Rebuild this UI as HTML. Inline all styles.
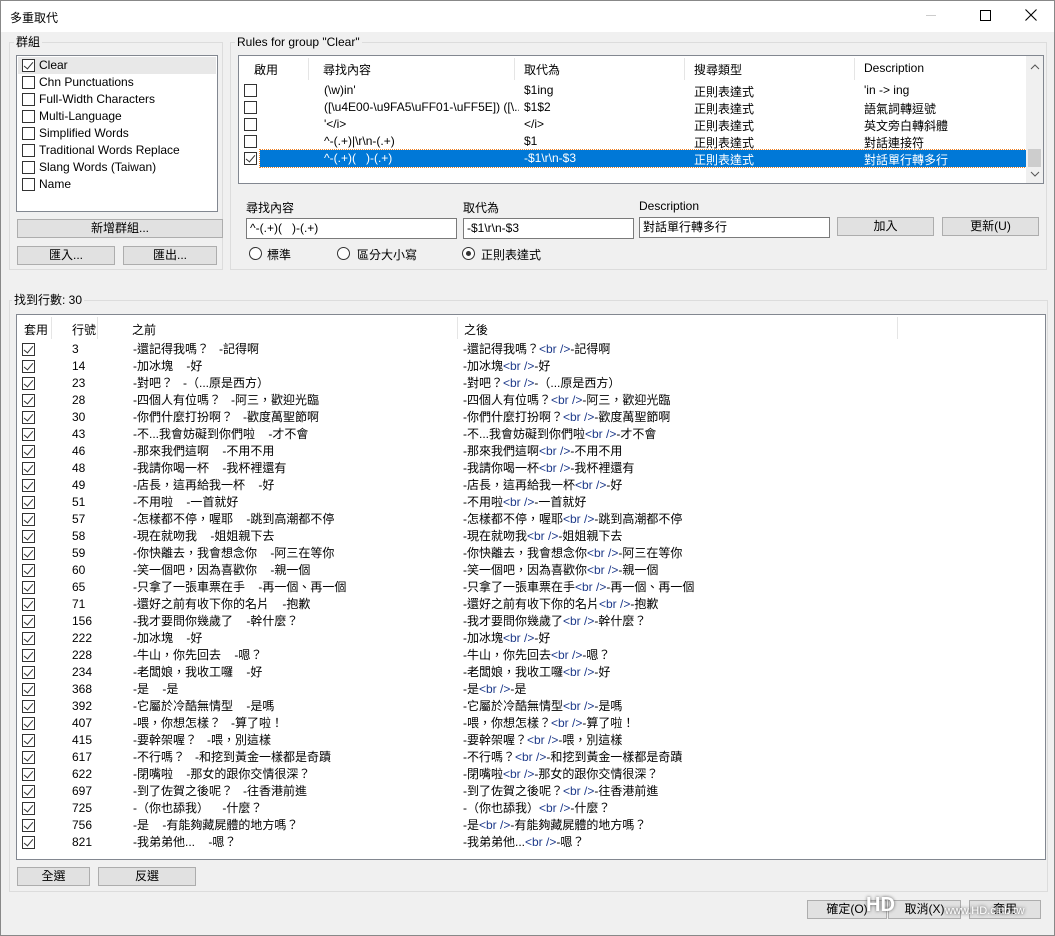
<!DOCTYPE html>
<html><head><meta charset="utf-8"><style>
*{box-sizing:border-box;margin:0;padding:0}
body{width:1055px;height:936px;background:#f0f0f0;font-family:"Liberation Sans","Noto Sans CJK TC",sans-serif;font-size:12px;color:#000;position:relative;overflow:hidden;border:1px solid #888}
.a{position:absolute;white-space:nowrap}
.title{left:0;top:0;width:1053px;height:31px;background:#fff}
.gb{position:absolute;border:1px solid #dcdcdc}
.gl{position:absolute;background:#f0f0f0;padding:0 2px;line-height:14px}
.box{position:absolute;background:#fff;border:1px solid #828790}
.btn{position:absolute;background:#e1e1e1;border:1px solid #adadad;text-align:center;line-height:16px}
.inp{position:absolute;background:#fff;border:1px solid #7a7a7a;line-height:18px;padding-left:3px}
.cb{position:absolute;width:13px;height:13px;border:1px solid #333;background:#fff}
.cb.k::after{content:"";position:absolute;left:3px;top:0px;width:4px;height:8px;border:solid #333;border-width:0 1px 1px 0;transform:rotate(40deg)}
.rd{position:absolute;width:13px;height:13px;border:1px solid #333;border-radius:50%;background:#fff}
.rd.on::after{content:"";position:absolute;left:3px;top:3px;width:5px;height:5px;border-radius:50%;background:#333}
.row{position:absolute;left:0;height:17px;line-height:17px;width:100%}
.row span{position:absolute}
b{font-weight:normal;color:#1e3a8a}
</style></head><body>
<div class="a title"></div>
<div class="a" style="left:9px;top:8px;font-size:12px">多重取代</div>
<div class="a" style="left:925px;top:14px;width:10px;height:1px;background:#ccc"></div>
<div class="a" style="left:979px;top:9px;width:11px;height:11px;border:1px solid #000"></div>
<svg class="a" style="left:1024px;top:8px" width="12" height="12"><path d="M0.5 0.5L11.5 11.5M11.5 0.5L0.5 11.5" stroke="#000" stroke-width="1.1"/></svg>

<!-- group box 群組 -->
<div class="gb" style="left:8px;top:41px;width:214px;height:228px"></div>
<div class="gl" style="left:13px;top:34px">群組</div>
<div class="box" style="left:15px;top:54px;width:202px;height:157px">
 <div class="a" style="left:1px;top:1px;width:198px;height:17px;background:#e8e8e8"></div>
 <div class="cb k" style="left:5px;top:3px"></div><div class="a" style="left:22px;top:2px">Clear</div>
 <div class="cb" style="left:5px;top:20px"></div><div class="a" style="left:22px;top:19px">Chn Punctuations</div>
 <div class="cb" style="left:5px;top:37px"></div><div class="a" style="left:22px;top:36px">Full-Width Characters</div>
 <div class="cb" style="left:5px;top:54px"></div><div class="a" style="left:22px;top:53px">Multi-Language</div>
 <div class="cb" style="left:5px;top:71px"></div><div class="a" style="left:22px;top:70px">Simplified Words</div>
 <div class="cb" style="left:5px;top:88px"></div><div class="a" style="left:22px;top:87px">Traditional Words Replace</div>
 <div class="cb" style="left:5px;top:105px"></div><div class="a" style="left:22px;top:104px">Slang Words (Taiwan)</div>
 <div class="cb" style="left:5px;top:122px"></div><div class="a" style="left:22px;top:121px">Name</div>
</div>
<div class="btn" style="left:16px;top:218px;width:206px;height:19px">新增群組...</div>
<div class="btn" style="left:16px;top:245px;width:98px;height:19px">匯入...</div>
<div class="btn" style="left:122px;top:245px;width:94px;height:19px">匯出...</div>

<!-- rules -->
<div class="gb" style="left:229px;top:41px;width:817px;height:228px"></div>
<div class="gl" style="left:234px;top:34px">Rules for group "Clear"</div>
<div class="box" style="left:237px;top:54px;width:806px;height:129px">
 <div class="a" style="left:69px;top:2px;width:1px;height:22px;background:#e5e5e5"></div>
 <div class="a" style="left:275px;top:2px;width:1px;height:22px;background:#e5e5e5"></div>
 <div class="a" style="left:445px;top:2px;width:1px;height:22px;background:#e5e5e5"></div>
 <div class="a" style="left:615px;top:2px;width:1px;height:22px;background:#e5e5e5"></div>
 <div class="a" style="left:15px;top:5px">啟用</div>
 <div class="a" style="left:84px;top:5px">尋找內容</div>
 <div class="a" style="left:285px;top:5px">取代為</div>
 <div class="a" style="left:455px;top:5px">搜尋類型</div>
 <div class="a" style="left:625px;top:5px">Description</div>
 <div class="a" style="left:21px;top:94px;width:766px;height:17px;background:#0078d7;outline:1px dotted #f08020"></div>
 <div class="cb" style="left:5px;top:28px"></div>
 <div class="cb" style="left:5px;top:45px"></div>
 <div class="cb" style="left:5px;top:62px"></div>
 <div class="cb" style="left:5px;top:79px"></div>
 <div class="cb k" style="left:5px;top:96px"></div>
 <div class="a" style="left:85px;top:27px">(\w)in'</div><div class="a" style="left:285px;top:27px">$1ing</div><div class="a" style="left:455px;top:27px">正則表達式</div><div class="a" style="left:625px;top:27px">'in -&gt; ing</div>
 <div class="a" style="left:85px;top:44px;width:195px;overflow:hidden">([\u4E00-\u9FA5\uFF01-\uFF5E]) ([\...</div><div class="a" style="left:285px;top:44px">$1$2</div><div class="a" style="left:455px;top:44px">正則表達式</div><div class="a" style="left:625px;top:44px">語氣詞轉逗號</div>
 <div class="a" style="left:85px;top:61px">'&lt;/i&gt;</div><div class="a" style="left:285px;top:61px">&lt;/i&gt;</div><div class="a" style="left:455px;top:61px">正則表達式</div><div class="a" style="left:625px;top:61px">英文旁白轉斜體</div>
 <div class="a" style="left:85px;top:78px">^-(.+)|\r\n-(.+)</div><div class="a" style="left:285px;top:78px">$1</div><div class="a" style="left:455px;top:78px">正則表達式</div><div class="a" style="left:625px;top:78px">對話連接符</div>
 <div class="a" style="left:85px;top:95px;color:#fff">^-(.+)(&nbsp;&nbsp;&nbsp;)-(.+)</div><div class="a" style="left:285px;top:95px;color:#fff">-$1\r\n-$3</div><div class="a" style="left:455px;top:95px;color:#fff">正則表達式</div><div class="a" style="left:625px;top:95px;color:#fff">對話單行轉多行</div>
 <div class="a" style="left:787px;top:0;width:17px;height:127px;background:#f0f0f0"></div>
 <div class="a" style="left:789px;top:93px;width:13px;height:18px;background:#cdcdcd"></div>
 <svg class="a" style="left:791px;top:8px" width="10" height="6"><path d="M1 5L5 1L9 5" stroke="#555" fill="none"/></svg>
 <svg class="a" style="left:791px;top:115px" width="10" height="6"><path d="M1 1L5 5L9 1" stroke="#555" fill="none"/></svg>
</div>
<div class="a" style="left:245px;top:198px">尋找內容</div>
<div class="a" style="left:462px;top:198px">取代為</div>
<div class="a" style="left:638px;top:198px">Description</div>
<div class="inp" style="left:245px;top:217px;width:211px;height:21px">^-(.+)(&nbsp;&nbsp;&nbsp;)-(.+)</div>
<div class="inp" style="left:462px;top:217px;width:171px;height:21px">-$1\r\n-$3</div>
<div class="inp" style="left:638px;top:216px;width:191px;height:21px">對話單行轉多行</div>
<div class="btn" style="left:836px;top:216px;width:97px;height:19px">加入</div>
<div class="btn" style="left:941px;top:216px;width:97px;height:19px">更新(U)</div>
<div class="rd" style="left:248px;top:246px"></div><div class="a" style="left:266px;top:245px">標準</div>
<div class="rd" style="left:336px;top:246px"></div><div class="a" style="left:356px;top:245px">區分大小寫</div>
<div class="rd on" style="left:461px;top:246px"></div><div class="a" style="left:480px;top:245px">正則表達式</div>

<!-- results -->
<div class="gb" style="left:8px;top:299px;width:1039px;height:592px"></div>
<div class="gl" style="left:11px;top:292px">找到行數: 30</div>
<div class="box" style="left:15px;top:313px;width:1030px;height:546px">
 <div class="a" style="left:34px;top:2px;width:1px;height:22px;background:#e5e5e5"></div>
 <div class="a" style="left:80px;top:2px;width:1px;height:22px;background:#e5e5e5"></div>
 <div class="a" style="left:440px;top:2px;width:1px;height:22px;background:#e5e5e5"></div>
 <div class="a" style="left:880px;top:2px;width:1px;height:22px;background:#e5e5e5"></div>
 <div class="a" style="left:7px;top:6px">套用</div>
 <div class="a" style="left:55px;top:6px">行號</div>
 <div class="a" style="left:115px;top:6px">之前</div>
 <div class="a" style="left:447px;top:6px">之後</div>
 <div class="a" style="left:0;top:26px;width:100%;height:520px">
<div class="row" style="top:0"><span class="cb k" style="left:5px;top:2px"></span><span style="left:55px">3</span><span style="left:116px">-還記得我嗎？ &nbsp;&nbsp;-記得啊</span><span style="left:446px">-還記得我嗎？<b>&lt;br /&gt;</b>-記得啊</span></div>
<div class="row" style="top:17px"><span class="cb k" style="left:5px;top:2px"></span><span style="left:55px">14</span><span style="left:116px">-加冰塊 &nbsp;&nbsp;&nbsp;-好</span><span style="left:446px">-加冰塊<b>&lt;br /&gt;</b>-好</span></div>
<div class="row" style="top:34px"><span class="cb k" style="left:5px;top:2px"></span><span style="left:55px">23</span><span style="left:116px">-對吧？ &nbsp;&nbsp;-（...原是西方）</span><span style="left:446px">-對吧？<b>&lt;br /&gt;</b>-（...原是西方）</span></div>
<div class="row" style="top:51px"><span class="cb k" style="left:5px;top:2px"></span><span style="left:55px">28</span><span style="left:116px">-四個人有位嗎？ &nbsp;&nbsp;-阿三，歡迎光臨</span><span style="left:446px">-四個人有位嗎？<b>&lt;br /&gt;</b>-阿三，歡迎光臨</span></div>
<div class="row" style="top:68px"><span class="cb k" style="left:5px;top:2px"></span><span style="left:55px">30</span><span style="left:116px">-你們什麼打扮啊？ &nbsp;&nbsp;-歡度萬聖節啊</span><span style="left:446px">-你們什麼打扮啊？<b>&lt;br /&gt;</b>-歡度萬聖節啊</span></div>
<div class="row" style="top:85px"><span class="cb k" style="left:5px;top:2px"></span><span style="left:55px">43</span><span style="left:116px">-不...我會妨礙到你們啦 &nbsp;&nbsp;&nbsp;-才不會</span><span style="left:446px">-不...我會妨礙到你們啦<b>&lt;br /&gt;</b>-才不會</span></div>
<div class="row" style="top:102px"><span class="cb k" style="left:5px;top:2px"></span><span style="left:55px">46</span><span style="left:116px">-那來我們這啊 &nbsp;&nbsp;&nbsp;-不用不用</span><span style="left:446px">-那來我們這啊<b>&lt;br /&gt;</b>-不用不用</span></div>
<div class="row" style="top:119px"><span class="cb k" style="left:5px;top:2px"></span><span style="left:55px">48</span><span style="left:116px">-我請你喝一杯 &nbsp;&nbsp;&nbsp;-我杯裡還有</span><span style="left:446px">-我請你喝一杯<b>&lt;br /&gt;</b>-我杯裡還有</span></div>
<div class="row" style="top:136px"><span class="cb k" style="left:5px;top:2px"></span><span style="left:55px">49</span><span style="left:116px">-店長，這再給我一杯 &nbsp;&nbsp;&nbsp;-好</span><span style="left:446px">-店長，這再給我一杯<b>&lt;br /&gt;</b>-好</span></div>
<div class="row" style="top:153px"><span class="cb k" style="left:5px;top:2px"></span><span style="left:55px">51</span><span style="left:116px">-不用啦 &nbsp;&nbsp;&nbsp;-一首就好</span><span style="left:446px">-不用啦<b>&lt;br /&gt;</b>-一首就好</span></div>
<div class="row" style="top:170px"><span class="cb k" style="left:5px;top:2px"></span><span style="left:55px">57</span><span style="left:116px">-怎樣都不停，喔耶 &nbsp;&nbsp;&nbsp;-跳到高潮都不停</span><span style="left:446px">-怎樣都不停，喔耶<b>&lt;br /&gt;</b>-跳到高潮都不停</span></div>
<div class="row" style="top:187px"><span class="cb k" style="left:5px;top:2px"></span><span style="left:55px">58</span><span style="left:116px">-現在就吻我 &nbsp;&nbsp;&nbsp;-姐姐親下去</span><span style="left:446px">-現在就吻我<b>&lt;br /&gt;</b>-姐姐親下去</span></div>
<div class="row" style="top:204px"><span class="cb k" style="left:5px;top:2px"></span><span style="left:55px">59</span><span style="left:116px">-你快離去，我會想念你 &nbsp;&nbsp;&nbsp;-阿三在等你</span><span style="left:446px">-你快離去，我會想念你<b>&lt;br /&gt;</b>-阿三在等你</span></div>
<div class="row" style="top:221px"><span class="cb k" style="left:5px;top:2px"></span><span style="left:55px">60</span><span style="left:116px">-笑一個吧，因為喜歡你 &nbsp;&nbsp;&nbsp;-親一個</span><span style="left:446px">-笑一個吧，因為喜歡你<b>&lt;br /&gt;</b>-親一個</span></div>
<div class="row" style="top:238px"><span class="cb k" style="left:5px;top:2px"></span><span style="left:55px">65</span><span style="left:116px">-只拿了一張車票在手 &nbsp;&nbsp;&nbsp;-再一個、再一個</span><span style="left:446px">-只拿了一張車票在手<b>&lt;br /&gt;</b>-再一個、再一個</span></div>
<div class="row" style="top:255px"><span class="cb k" style="left:5px;top:2px"></span><span style="left:55px">71</span><span style="left:116px">-還好之前有收下你的名片 &nbsp;&nbsp;&nbsp;-抱歉</span><span style="left:446px">-還好之前有收下你的名片<b>&lt;br /&gt;</b>-抱歉</span></div>
<div class="row" style="top:272px"><span class="cb k" style="left:5px;top:2px"></span><span style="left:55px">156</span><span style="left:116px">-我才要問你幾歲了 &nbsp;&nbsp;&nbsp;-幹什麼？</span><span style="left:446px">-我才要問你幾歲了<b>&lt;br /&gt;</b>-幹什麼？</span></div>
<div class="row" style="top:289px"><span class="cb k" style="left:5px;top:2px"></span><span style="left:55px">222</span><span style="left:116px">-加冰塊 &nbsp;&nbsp;&nbsp;-好</span><span style="left:446px">-加冰塊<b>&lt;br /&gt;</b>-好</span></div>
<div class="row" style="top:306px"><span class="cb k" style="left:5px;top:2px"></span><span style="left:55px">228</span><span style="left:116px">-牛山，你先回去 &nbsp;&nbsp;&nbsp;-嗯？</span><span style="left:446px">-牛山，你先回去<b>&lt;br /&gt;</b>-嗯？</span></div>
<div class="row" style="top:323px"><span class="cb k" style="left:5px;top:2px"></span><span style="left:55px">234</span><span style="left:116px">-老闆娘，我收工囉 &nbsp;&nbsp;&nbsp;-好</span><span style="left:446px">-老闆娘，我收工囉<b>&lt;br /&gt;</b>-好</span></div>
<div class="row" style="top:340px"><span class="cb k" style="left:5px;top:2px"></span><span style="left:55px">368</span><span style="left:116px">-是 &nbsp;&nbsp;&nbsp;-是</span><span style="left:446px">-是<b>&lt;br /&gt;</b>-是</span></div>
<div class="row" style="top:357px"><span class="cb k" style="left:5px;top:2px"></span><span style="left:55px">392</span><span style="left:116px">-它屬於冷酷無情型 &nbsp;&nbsp;&nbsp;-是嗎</span><span style="left:446px">-它屬於冷酷無情型<b>&lt;br /&gt;</b>-是嗎</span></div>
<div class="row" style="top:374px"><span class="cb k" style="left:5px;top:2px"></span><span style="left:55px">407</span><span style="left:116px">-喂，你想怎樣？ &nbsp;&nbsp;-算了啦！</span><span style="left:446px">-喂，你想怎樣？<b>&lt;br /&gt;</b>-算了啦！</span></div>
<div class="row" style="top:391px"><span class="cb k" style="left:5px;top:2px"></span><span style="left:55px">415</span><span style="left:116px">-要幹架喔？ &nbsp;&nbsp;-喂，別這樣</span><span style="left:446px">-要幹架喔？<b>&lt;br /&gt;</b>-喂，別這樣</span></div>
<div class="row" style="top:408px"><span class="cb k" style="left:5px;top:2px"></span><span style="left:55px">617</span><span style="left:116px">-不行嗎？ &nbsp;&nbsp;-和挖到黃金一樣都是奇蹟</span><span style="left:446px">-不行嗎？<b>&lt;br /&gt;</b>-和挖到黃金一樣都是奇蹟</span></div>
<div class="row" style="top:425px"><span class="cb k" style="left:5px;top:2px"></span><span style="left:55px">622</span><span style="left:116px">-閉嘴啦 &nbsp;&nbsp;&nbsp;-那女的跟你交情很深？</span><span style="left:446px">-閉嘴啦<b>&lt;br /&gt;</b>-那女的跟你交情很深？</span></div>
<div class="row" style="top:442px"><span class="cb k" style="left:5px;top:2px"></span><span style="left:55px">697</span><span style="left:116px">-到了佐賀之後呢？ &nbsp;&nbsp;-往香港前進</span><span style="left:446px">-到了佐賀之後呢？<b>&lt;br /&gt;</b>-往香港前進</span></div>
<div class="row" style="top:459px"><span class="cb k" style="left:5px;top:2px"></span><span style="left:55px">725</span><span style="left:116px">-（你也舔我） &nbsp;&nbsp;&nbsp;-什麼？</span><span style="left:446px">-（你也舔我）<b>&lt;br /&gt;</b>-什麼？</span></div>
<div class="row" style="top:476px"><span class="cb k" style="left:5px;top:2px"></span><span style="left:55px">756</span><span style="left:116px">-是 &nbsp;&nbsp;&nbsp;-有能夠藏屍體的地方嗎？</span><span style="left:446px">-是<b>&lt;br /&gt;</b>-有能夠藏屍體的地方嗎？</span></div>
<div class="row" style="top:493px"><span class="cb k" style="left:5px;top:2px"></span><span style="left:55px">821</span><span style="left:116px">-我弟弟他... &nbsp;&nbsp;&nbsp;-嗯？</span><span style="left:446px">-我弟弟他...<b>&lt;br /&gt;</b>-嗯？</span></div>
 </div>
</div>
<div class="btn" style="left:16px;top:866px;width:73px;height:19px">全選</div>
<div class="btn" style="left:97px;top:866px;width:98px;height:19px">反選</div>

<div class="btn" style="left:806px;top:899px;width:80px;height:19px">確定(O)</div>
<div class="btn" style="left:887px;top:899px;width:73px;height:19px">取消(X)</div>
<div class="btn" style="left:968px;top:899px;width:72px;height:19px">套用</div>
<div class="a" style="left:865px;top:893px;font-size:20px;font-weight:bold;color:#fff;text-shadow:0 0 3px #555">HD</div>
<div class="a" style="left:944px;top:904px;font-size:11px;color:#fff;text-shadow:0 0 3px #333">www.HD.club.tw</div>
</body></html>
